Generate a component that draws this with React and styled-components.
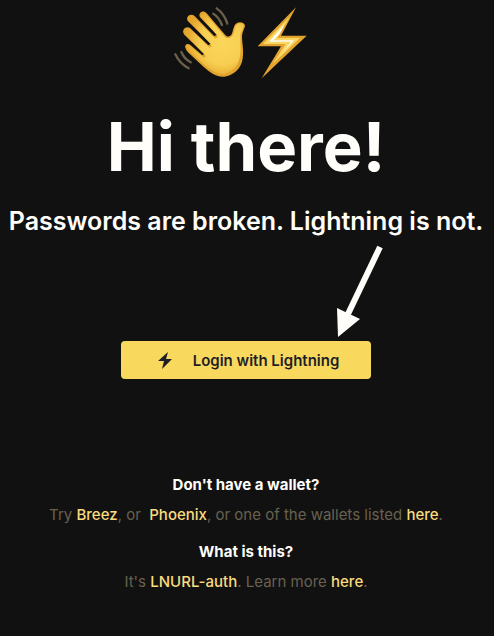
import React from 'react';
import styled, { createGlobalStyle } from 'styled-components';

const GlobalStyle = createGlobalStyle`
  *, *::before, *::after { box-sizing: border-box; }
  body {
    margin: 0;
    background: #111111;
    color: #fffefa;
    font-family: Inter, "Liberation Sans", sans-serif;
  }
`;

const Page = styled.main`
  min-height: 100vh;
  display: flex;
  flex-direction: column;
  align-items: center;
  padding: 3px 2px 40px 0;
  text-align: center;
  background: #111111;
`;

const Greeting = styled.svg`
  display: block;
  width: 140px;
  height: 76px;
  margin-right: 8px;
`;

const Title = styled.h1`
  margin: 32px 0 0;
  font-size: 67px;
  line-height: 72px;
  font-weight: 700;
  white-space: nowrap;
`;

const Subtitle = styled.p`
  margin: 20px 0 0;
  font-size: 25px;
  line-height: 36px;
  font-weight: 600;
  white-space: nowrap;
`;

const LoginArea = styled.div`
  position: relative;
  margin-top: 102px;
`;

const Arrow = styled.svg`
  position: absolute;
  right: -12px;
  bottom: 100%;
  width: 48px;
  height: 98px;
  pointer-events: none;
`;

const LoginButton = styled.button`
  display: flex;
  align-items: center;
  justify-content: center;
  gap: 20px;
  min-width: 250px;
  padding: 10px 30px 8px 34px;
  border: 0;
  border-radius: 4px;
  background: #f9d85e;
  color: #1d1f24;
  font: 600 15px/20px Inter, "Liberation Sans", sans-serif;
  white-space: nowrap;
  cursor: pointer;
`;

const ButtonBolt = styled.svg`
  flex: none;
  width: 16px;
  height: 20px;
`;

const Help = styled.section`
  margin-top: 93px;
  display: grid;
  gap: 12px;
`;

const Question = styled.h2`
  margin: 0 0 5px;
  font-size: 15px;
  line-height: 25px;
  font-weight: 700;
`;

const Answer = styled.p`
  margin: 0;
  font-size: 15px;
  line-height: 25px;
  color: #686150;
`;

const Link = styled.a`
  color: #f9dc7e;
  font-weight: 500;
  text-decoration: none;
  &:hover { text-decoration: underline; }
`;

function WaveAndBolt() {
  return (
    <Greeting viewBox="21 9 420 228" role="img" aria-label="Waving hand and lightning">
      <defs>
        <radialGradient id="skin" gradientUnits="userSpaceOnUse" cx="172" cy="128" r="110">
          <stop offset="0" stopColor="#fbd75b" />
          <stop offset="0.6" stopColor="#f7ce51" />
          <stop offset="1" stopColor="#e3a52c" />
        </radialGradient>
      </defs>
      <g fill="none" stroke="#6b6049" strokeWidth="7" strokeLinecap="round">
        <path d="M155 25Q178 41 187 71M145 41Q161 50 171 75" />
        <path d="M31 163Q44 191 71 205M49 156Q57 176 77 187" />
      </g>
      <path
        fill="#e2a22e"
        d="M61 143C58 134 68 128 76 135L112 166L117 162L58 104C48 91 61 76 75 84L130 136L137 131L69 64C60 50 76 38 88 47L148 109L155 104L105 52C98 39 114 28 125 40L180 104C186 111 193 111 198 106C204 99 203 84 211 73C219 62 238 66 240 76C240 85 231 95 231 112C231 128 237 149 233 176C229 206 205 226 178 230C151 232 133 215 117 202L69 157Q63 150 61 143Z"
      />
      <path
        fill="url(#skin)"
        d="M65 139C64 133 71 132 76 138L115 172C120 175 124 169 120 164L63 105C54 94 65 82 76 88L132 141C137 144 141 138 138 133L74 65C66 54 77 44 87 51L149 114C154 118 160 112 157 106L109 51C103 41 115 34 123 43L177 108C186 118 197 116 203 106C209 97 207 84 214 76C220 67 234 69 236 76C236 85 226 94 226 112C225 126 230 150 224 174C217 203 199 218 177 222C156 223 137 209 121 197L72 153Q66 147 65 139Z"
      />
      <path fill="#e4a42d" d="M393 22L278 139H348L290 235L425 107H348Z" />
      <path fill="#f8d765" d="M374 50L294 132H362L323 192L405 114H337Z" />
      <path fill="#fffdf0" d="M358 73L312 125H378L350 161L387 121H326L344 102Z" />
    </Greeting>
  );
}

export default function App() {
  return (
    <>
      <GlobalStyle />
      <Page>
        <WaveAndBolt />
        <Title>Hi there!</Title>
        <Subtitle>Passwords are broken. Lightning is not.</Subtitle>
        <LoginArea>
          <Arrow viewBox="0 0 48 98" aria-hidden="true">
            <path d="M45 4L13 71" stroke="#fffefa" strokeWidth="6" />
            <path d="M2 65L25 76L3 94Z" fill="#fffefa" />
          </Arrow>
          <LoginButton type="button">
            <ButtonBolt viewBox="0 0 16 20" aria-hidden="true">
              <path d="M11 1L1 10H7L5 18L15 8H9Z" fill="#1d1f24" />
            </ButtonBolt>
            Login with Lightning
          </LoginButton>
        </LoginArea>
        <Help>
          <div>
            <Question>Don't have a wallet?</Question>
            <Answer>
              Try <Link href="#breez">Breez</Link>, or {'\u00a0'}
              <Link href="#phoenix">Phoenix</Link>, or one of the wallets listed{' '}
              <Link href="#wallets">here</Link>.
            </Answer>
          </div>
          <div>
            <Question>What is this?</Question>
            <Answer>
              It's <Link href="#lnurl-auth">LNURL-auth</Link>. Learn more{' '}
              <Link href="#learn-more">here</Link>.
            </Answer>
          </div>
        </Help>
      </Page>
    </>
  );
}
